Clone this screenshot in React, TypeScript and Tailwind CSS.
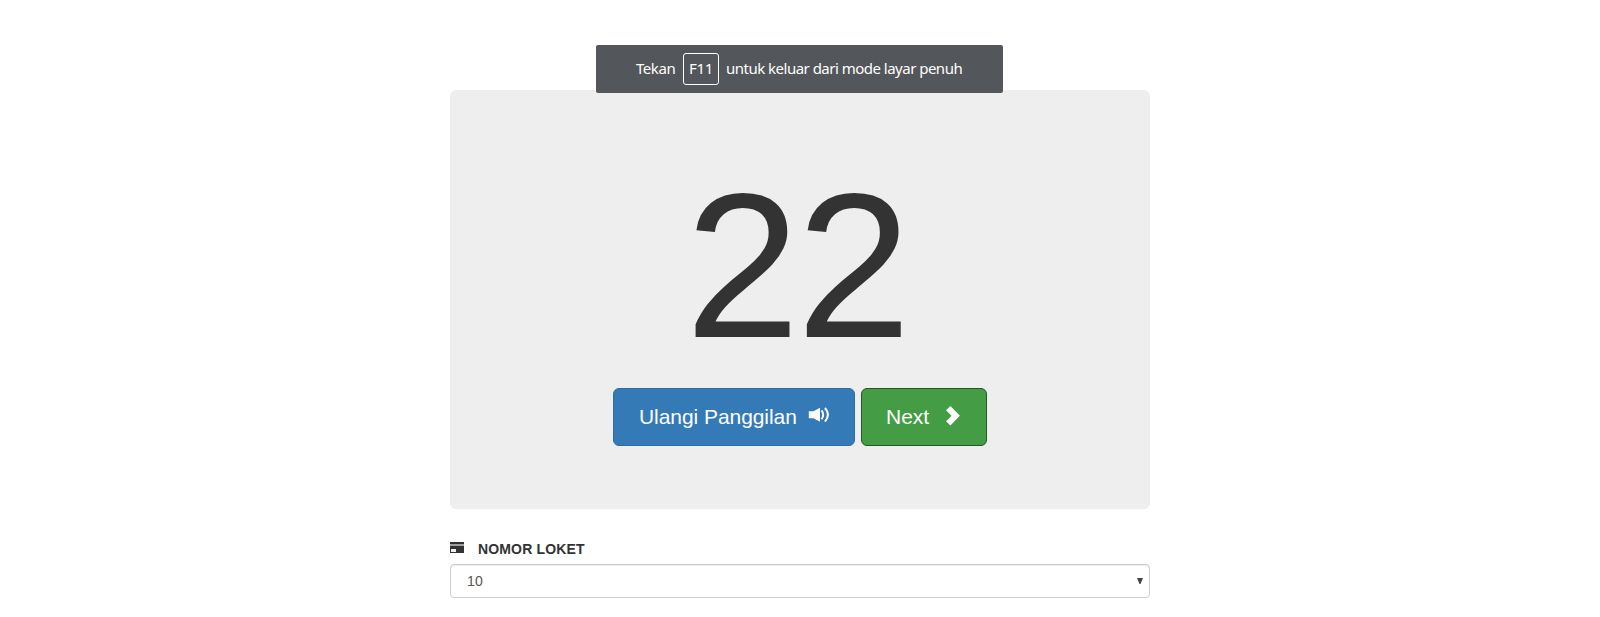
import React from 'react';

function VolumeIcon() {
  return (
    <svg className="h-[16px] w-[22px] shrink-0" viewBox="0 0 22 16" fill="none" aria-hidden="true">
      <path d="M0.8 4.3H5.5L12 0.8V14.8L5.5 11.2H0.8Z" fill="#fff" />
      <path d="M13.6 3.4Q16.8 7.8 13.6 12.2" stroke="#fff" strokeWidth="1.9" />
      <path d="M17 1Q22.8 7.8 17 14.6" stroke="#fff" strokeWidth="2" />
    </svg>
  );
}

function ChevronIcon() {
  return (
    <svg className="h-[20px] w-[14px] shrink-0" viewBox="0 0 14 20" aria-hidden="true">
      <path d="M4.4 0L13.9 9.7L4.4 19.4L0.1 15.3L5.5 9.7L0.1 4.2Z" fill="#fff" />
    </svg>
  );
}

function CardIcon() {
  return (
    <svg className="h-[11px] w-[14px] shrink-0" viewBox="0 0 14 11" aria-hidden="true">
      <path d="M0 0H14V2H0Z" fill="#333" />
      <path d="M0 2H14V4H0Z" fill="#a0a0a0" />
      <path d="M0 4H14V11H0Z" fill="#333" />
      <path d="M1 7H6V10H1Z" fill="#f0f0f0" />
    </svg>
  );
}

function FullscreenNotice() {
  return (
    <div className="absolute left-[596px] top-[45px] flex h-[48px] w-[407px] items-center rounded-[2px] bg-[#53565a] pl-[40px] font-['Noto_Sans','Open_Sans',sans-serif] text-[15px] leading-[20px] text-white">
      <span className="-mt-[2px] w-[47px] whitespace-nowrap tracking-[-0.45px]">Tekan</span>
      <kbd className="flex h-[32px] w-[36px] items-center justify-center rounded-[3px] border border-white pb-[2px] font-['Noto_Sans','Open_Sans',sans-serif] text-[15px] tracking-[-0.3px]">
        F11
      </kbd>
      <span className="-mt-[2px] ml-[7px] whitespace-nowrap tracking-[-0.51px]">untuk keluar dari mode layar penuh</span>
    </div>
  );
}

export default function App() {
  return (
    <div className="relative min-h-[617px] bg-white pt-[90px] font-['Liberation_Sans',Arial,sans-serif] text-[#333]">
      <main className="mx-auto w-[700px]">
        <section className="flex h-[419px] flex-col items-center rounded-[6px] bg-[#eee] pt-[68px]">
          <h1 className="h-[220px] pr-[7px] text-[206px] leading-[217px] tracking-[-3.4px]">22</h1>
          <div className="mt-[10px] flex gap-[6px]">
            <button className="flex h-[58px] w-[242px] items-center rounded-[6px] border border-[#2e6da4] bg-[#337ab7] pl-[25px] text-[21px] text-white">
              <span className="w-[169px] whitespace-nowrap text-left tracking-[-0.06px]">Ulangi Panggilan</span>
              <span className="-mt-[4px]"><VolumeIcon /></span>
            </button>
            <button className="flex h-[58px] w-[126px] items-center rounded-[6px] border border-[#255625] bg-[#449d44] pl-[24px] text-[21px] text-white">
              <span className="w-[60px] whitespace-nowrap text-left">Next</span>
              <span className="-mt-[3px]"><ChevronIcon /></span>
            </button>
          </div>
        </section>
        <label className="mt-[30px] flex h-[20px] items-center text-[14px] font-bold">
          <span className="-mt-[3px]"><CardIcon /></span>
          <span className="ml-[14px] whitespace-nowrap tracking-[0.15px]">NOMOR LOKET</span>
        </label>
        <div className="mt-[5px] flex h-[34px] items-center justify-between rounded-[4px] border border-[#ccc] bg-white pl-[16px] pr-[6px] text-[14px] text-[#555] shadow-[inset_0_1px_1px_rgba(0,0,0,0.075)]">
          <span className="tracking-[0.3px]">10</span>
          <svg className="h-[6px] w-[6px]" viewBox="0 0 6 6" aria-hidden="true">
            <path d="M0 0H6L3.5 6H2.5Z" fill="#444" />
          </svg>
        </div>
      </main>
      <FullscreenNotice />
    </div>
  );
}
